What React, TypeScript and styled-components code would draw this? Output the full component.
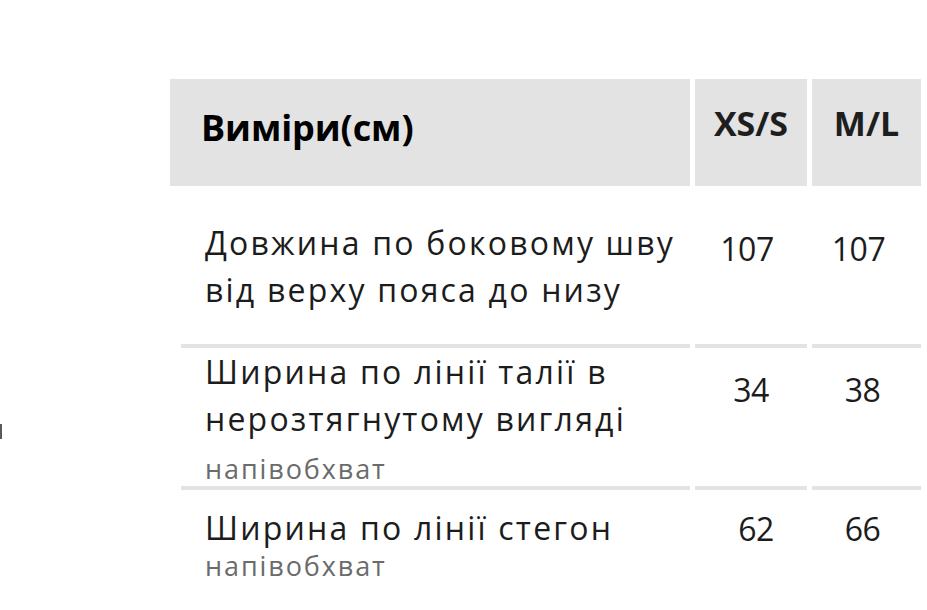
import React from 'react';
import styled, {createGlobalStyle} from 'styled-components';

type Value = {text: string; dx: number};

type Row = {
  lines: string[];
  note?: string;
  noteGap?: number;
  values: [Value, Value];
  padTop: number;
  valueTop: number;
  height: number;
};

const rows: Row[] = [
  {
    lines: ['Довжина по боковому шву', 'від верху пояса до низу'],
    values: [{text: '107', dx: -4}, {text: '107', dx: -8}],
    padTop: 33, valueTop: 43, height: 158,
  },
  {
    lines: ['Ширина по лінії талії в', 'нерозтягнутому вигляді'],
    note: 'напівобхват', noteGap: 9,
    values: [{text: '34', dx: 0}, {text: '38', dx: -4}],
    padTop: 0, valueTop: 22, height: 142,
  },
  {
    lines: ['Ширина по лінії стегон'],
    note: 'напівобхват', noteGap: -3,
    values: [{text: '62', dx: 5}, {text: '66', dx: -4}],
    padTop: 14, valueTop: 19, height: 124,
  },
];

const GlobalStyle = createGlobalStyle`
  html, body {
    margin: 0;
    padding: 0;
    background: #ffffff;
    overflow: hidden;
  }
  body {
    font-family: "Open Sans", "Noto Sans", sans-serif;
    color: #222222;
  }
`;

export default function App() {
  return (
    <>
      <GlobalStyle/>
      <Page>
        <Side>
          <Mark/>
        </Side>
        <Table>
          <HeadCell $first>Виміри(см)</HeadCell>
          <HeadCell>XS/S</HeadCell>
          <HeadCell>M/L</HeadCell>
          {rows.map((row, i) => (
            <React.Fragment key={i}>
              <LabelCell $divider={i > 0} $padTop={row.padTop} $height={row.height}>
                {row.lines.map(line => <Line key={line}>{line}</Line>)}
                {row.note && <Note $gap={row.noteGap ?? 0}>{row.note}</Note>}
              </LabelCell>
              {row.values.map((v, j) => (
                <ValueCell key={j} $divider={i > 0} $padTop={row.valueTop} $height={row.height} $dx={v.dx}>
                  {v.text}
                </ValueCell>
              ))}
            </React.Fragment>
          ))}
        </Table>
      </Page>
    </>
  );
}

const Page = styled.div`
  display: flex;
  flex-direction: row;
  width: 927px;
  height: 610px;
  padding-top: 79px;
  box-sizing: border-box;
`;

const Side = styled.div`
  width: 170px;
  flex-shrink: 0;
`;

const Mark = styled.div`
  width: 2px;
  height: 15px;
  margin-top: 345px;
  background: #5a5a5a;
`;

const Table = styled.div`
  display: grid;
  grid-template-columns: 520px 112px 109px;
  column-gap: 5px;
  align-content: start;
`;

const HeadCell = styled.div<{$first?: boolean}>`
  height: 107px;
  background: #e3e3e3;
  display: flex;
  align-items: center;
  justify-content: ${p => p.$first ? 'flex-start' : 'center'};
  padding: ${p => p.$first ? '0 0 10px 31px' : '0 0 20px 0'};
  box-sizing: border-box;
  font-family: "Open Sans", sans-serif;
  font-weight: 700;
  font-size: ${p => p.$first ? 36 : 34}px;
  color: ${p => p.$first ? '#000000' : '#1e1e1e'};
  letter-spacing: ${p => p.$first ? '-0.1px' : '0'};
`;

const LabelCell = styled.div<{$divider: boolean; $padTop: number; $height: number}>`
  margin-left: 11px;
  height: ${p => p.$height}px;
  box-sizing: border-box;
  border-top: ${p => p.$divider ? '4px solid #e3e3e3' : 'none'};
  padding: ${p => p.$padTop}px 0 0 24px;
`;

const Line = styled.div`
  font-size: 32px;
  line-height: 47px;
  letter-spacing: 2.2px;
  color: #1c1c1c;
  white-space: nowrap;
`;

const Note = styled.div<{$gap: number}>`
  margin-top: ${p => p.$gap}px;
  font-size: 27px;
  line-height: 36px;
  letter-spacing: 1.9px;
  color: #6b6b6b;
`;

const ValueCell = styled.div<{$divider: boolean; $padTop: number; $height: number; $dx: number}>`
  height: ${p => p.$height}px;
  box-sizing: border-box;
  border-top: ${p => p.$divider ? '4px solid #e3e3e3' : 'none'};
  padding-top: ${p => p.$padTop}px;
  padding-left: ${p => p.$dx > 0 ? p.$dx * 2 : 0}px;
  padding-right: ${p => p.$dx < 0 ? -p.$dx * 2 : 0}px;
  text-align: center;
  font-size: 32px;
  line-height: 40px;
  letter-spacing: -0.5px;
  color: #1c1c1c;
`;
